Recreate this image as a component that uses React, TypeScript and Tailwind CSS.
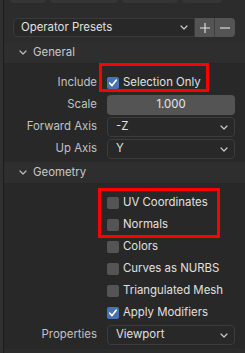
import type { ReactNode } from 'react'

function Chevron({ className = '' }: { className?: string }) {
  return (
    <svg className={className} width="8" height="5" viewBox="0 0 8 5" fill="none">
      <path d="M1 1l3 3 3-3" stroke="currentColor" strokeWidth="1.2" strokeLinecap="round" strokeLinejoin="round" />
    </svg>
  )
}

function PanelHeader({ title }: { title: string }) {
  return (
    <div className="h-[22px] flex items-center pl-[15px] gap-[6px] bg-[#2e2e2e] border-b border-[#262626] text-[#c9c9c9]">
      <Chevron className="text-[#bdbdbd]" />
      <span className="text-[11.4px]">{title}</span>
    </div>
  )
}

function Row({ label, children }: { label?: string; children: ReactNode }) {
  return (
    <div className="h-[22px] flex items-center">
      <div className="w-[93px] text-right text-[11.4px] text-[#c2c2c2]">{label}</div>
      <div className="ml-[10px] w-[128px] flex items-center">{children}</div>
    </div>
  )
}

function Check({ checked, label }: { checked?: boolean; label: string }) {
  return (
    <div className="flex items-center gap-[4px]">
      {checked ? (
        <div className="w-[12px] h-[12px] rounded-[2px] bg-[#4772b3] flex items-center justify-center">
          <svg width="10" height="10" viewBox="0 0 10 10" fill="none">
            <path d="M1.8 5.2l2.2 2.4 4.2-5.4" stroke="#fff" strokeWidth="1.7" strokeLinecap="round" strokeLinejoin="round" />
          </svg>
        </div>
      ) : (
        <div className="w-[12px] h-[12px] rounded-[2px] bg-[#545454]" />
      )}
      <span className="text-[11.4px] text-[#e0e0e0]">{label}</span>
    </div>
  )
}

function Select({ value }: { value: string }) {
  return (
    <div className="w-full h-[20px] rounded-[4px] bg-[#282828] border border-[#3c3c3c] flex items-center justify-between pl-[8px] pr-[6px]">
      <span className="text-[11.4px] text-[#e0e0e0]">{value}</span>
      <Chevron className="text-[#c8c8c8]" />
    </div>
  )
}

export default function App() {
  return (
    <div className="relative w-[245px] h-[353px] overflow-hidden bg-[#2c2c2c] flex font-['Inter','Noto_Sans',sans-serif]">
      <div className="w-[3px] bg-[#303030]" />
      <div className="w-px bg-[#1c1c1c]" />
      <div className="flex-1 flex flex-col">
        {/* cut-off toolbar */}
        <div className="h-[3px] flex gap-[4px] px-[6px]">
          <div className="w-[36px] h-full bg-[#353535] rounded-b-[3px]" />
          <div className="w-[68px] h-full bg-[#353535] rounded-b-[3px]" />
          <div className="w-[56px] h-full bg-[#353535] rounded-b-[3px]" />
          <div className="w-[40px] h-full bg-[#353535] rounded-b-[3px]" />
        </div>

        {/* presets */}
        <div className="mt-[15px] h-[19px] flex pl-[9px] pr-[10px]">
          <div className="flex-1 rounded-l-[4px] bg-[#282828] border border-[#3a3a3a] flex items-center justify-between pl-[7px] pr-[6px]">
            <span className="text-[11.4px] text-[#e0e0e0]">Operator Presets</span>
            <Chevron className="text-[#c8c8c8]" />
          </div>
          <div className="w-[20px] bg-[#545454] flex items-center justify-center border-r border-[#3f3f3f]">
            <svg width="10" height="10" viewBox="0 0 10 10">
              <path d="M5 0v10M0 5h10" stroke="#e6e6e6" strokeWidth="1.1" />
            </svg>
          </div>
          <div className="w-[20px] bg-[#545454] rounded-r-[4px] flex items-center justify-center">
            <svg width="10" height="10" viewBox="0 0 10 10">
              <path d="M0 5h10" stroke="#e6e6e6" strokeWidth="1.1" />
            </svg>
          </div>
        </div>

        <div className="mt-[5px]">
          <PanelHeader title="General" />
        </div>
        <div className="bg-[#282828] pt-[8px] pb-[2px]">
          <Row label="Include">
            <Check checked label="Selection Only" />
          </Row>
          <Row label="Scale">
            <div className="w-full h-[20px] rounded-[4px] bg-[#545454] flex items-center justify-center text-[11.4px] text-[#e6e6e6]">
              1.000
            </div>
          </Row>
          <Row label="Forward Axis">
            <Select value="-Z" />
          </Row>
          <Row label="Up Axis">
            <Select value="Y" />
          </Row>
        </div>

        <PanelHeader title="Geometry" />
        <div className="bg-[#282828] pt-[8px] pb-[3px]">
          <Row>
            <Check label="UV Coordinates" />
          </Row>
          <Row>
            <Check label="Normals" />
          </Row>
          <Row>
            <Check label="Colors" />
          </Row>
          <Row>
            <Check label="Curves as NURBS" />
          </Row>
          <Row>
            <Check label="Triangulated Mesh" />
          </Row>
          <Row>
            <Check checked label="Apply Modifiers" />
          </Row>
          <Row label="Properties">
            <Select value="Viewport" />
          </Row>
        </div>
      </div>

      {/* annotation boxes */}
      <div className="absolute left-[99px] top-[63px] w-[110px] h-[29px] border-[3px] border-[#ff0000]" />
      <div className="absolute left-[98px] top-[188px] w-[122px] h-[50px] border-[3px] border-[#ff0000]" />
    </div>
  )
}
